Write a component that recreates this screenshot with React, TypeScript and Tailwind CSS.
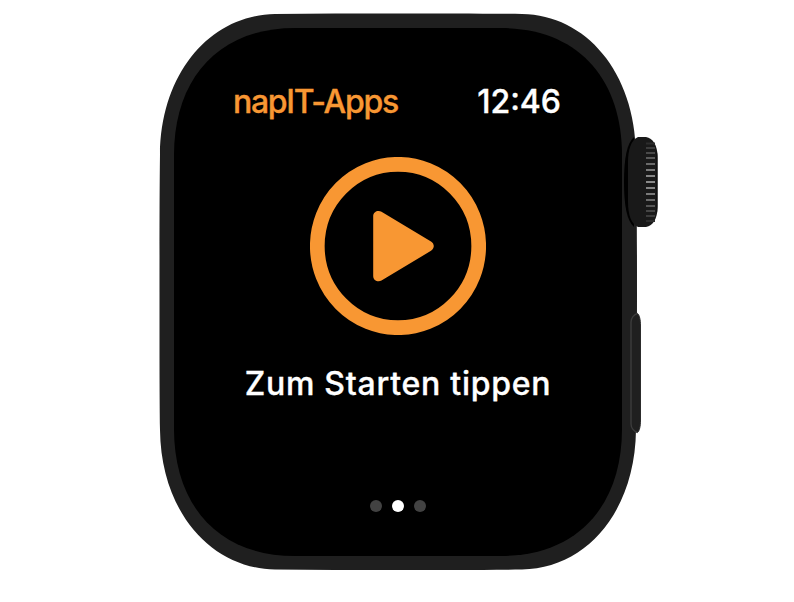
const ridges = [
  { y: 142.5, c: '#2d2d2d' },
  { y: 147, c: '#3c3c3c' },
  { y: 152, c: '#4a4a4a' },
  { y: 157, c: '#5a5a5a' },
  { y: 163, c: '#6a6a6a' },
  { y: 169, c: '#7a7a7a' },
  { y: 175, c: '#858585' },
  { y: 181, c: '#8a8a8a' },
  { y: 187, c: '#858585' },
  { y: 193, c: '#7a7a7a' },
  { y: 199, c: '#6a6a6a' },
  { y: 205, c: '#555555' },
  { y: 210, c: '#454545' },
  { y: 215, c: '#3c3c3c' },
  { y: 220, c: '#2d2d2d' },
];

function WatchCase() {
  return (
    <svg className="absolute inset-0" width="794" height="602" viewBox="0 0 794 602" aria-hidden="true">
      <path
        d="M159.5 292C159.5 240 159.5 190 160 154C161 72 211 15 275 14C315 13.5 355 13.5 397 13.5S485 13.5 522 14C586 15 635 72 636 154C636.8 190 637 240 637 292S636.8 394 636 430C635 512 586 568.5 522 569.5C485 570 439 570 397 570S315 570 275 569.5C211 568.5 161 512 160 430C159.5 394 159.5 344 159.5 292Z"
        fill="#1f1f1f"
      />
      <path
        d="M174 292V155C174 80 217 28 295 28H501C579 28 622 80 622 155V429C622 504 579 556 501 556H295C217 556 174 504 174 429Z"
        fill="#000"
      />
      <path d="M634 137C627 143 624 158 624 182S627 221 634 227Z" fill="#000" />
      <path
        d="M638 137H646C653 138 657.5 146 657.5 156V208C657.5 218 653 226 646 227H638C631 224 628 214 628 202V162C628 150 631 140 638 137Z"
        fill="#191919"
      />
      {ridges.map((r) => (
        <rect key={r.y} x="646" y={r.y} width="9" height="2" fill={r.c} />
      ))}
      <path d="M656.5 150Q657.5 153 657.5 158V206Q657.5 211 656.5 214Z" fill="#0b0b0b" />
      <path
        d="M637.5 313.5C634 314.5 631 318 631 322V424C631 428 634 431.5 637.5 432.5C639.5 431 640.5 426 640.5 420V326C640.5 320 639.5 315 637.5 313.5Z"
        fill="#1f1f1f"
      />
      <path d="M637.5 313.5C634 314.5 631 318 631 322V424C631 428 634 431.5 637.5 432.5" fill="none" stroke="#3c3c3c" strokeWidth="1.4" />
      <path d="M637.5 313.5C639.5 315 640.5 320 640.5 326V420C640.5 426 639.5 431 637.5 432.5" fill="none" stroke="#2c2c2c" />
    </svg>
  );
}

function PlayIcon() {
  return (
    <svg width="176" height="178" viewBox="0 0 176 178" aria-hidden="true">
      <ellipse cx="88" cy="89" rx="80.7" ry="81.7" fill="none" stroke="#f89733" strokeWidth="14.7" />
      <path
        d="M63.2 59C63.2 54.7 68 52.6 71.5 54.7L121 84.4C124.7 86.7 124.7 91.5 121 93.8L71.5 123.5C68 125.6 63.2 123.5 63.2 119Z"
        fill="#f89733"
      />
    </svg>
  );
}

export default function App() {
  return (
    <main className="relative h-[602px] w-[794px] overflow-hidden bg-white font-['Inter',sans-serif]">
      <WatchCase />
      <div className="relative ml-[174px] flex h-[556px] w-[448px] flex-col items-center pt-[82px] font-medium text-white [-webkit-text-stroke:0.35px_currentColor]">
        <header className="flex h-10 w-full items-center justify-between pr-[61px] pl-[59px] text-[32px] leading-10">
          <h1 className="whitespace-nowrap tracking-[-1.3px] text-[#f89733]">napIT-Apps</h1>
          <time className="whitespace-nowrap">12:46</time>
        </header>
        <button type="button" aria-label="Start" className="mt-[35px] block">
          <PlayIcon />
        </button>
        <p className="mt-[29px] whitespace-nowrap text-[32px] leading-10 tracking-[0.75px]">Zum Starten tippen</p>
        <div className="mt-24 flex gap-2.5">
          <span className="size-3 rounded-full bg-[#424242]" />
          <span className="size-3 rounded-full bg-white" />
          <span className="size-3 rounded-full bg-[#424242]" />
        </div>
      </div>
    </main>
  );
}
